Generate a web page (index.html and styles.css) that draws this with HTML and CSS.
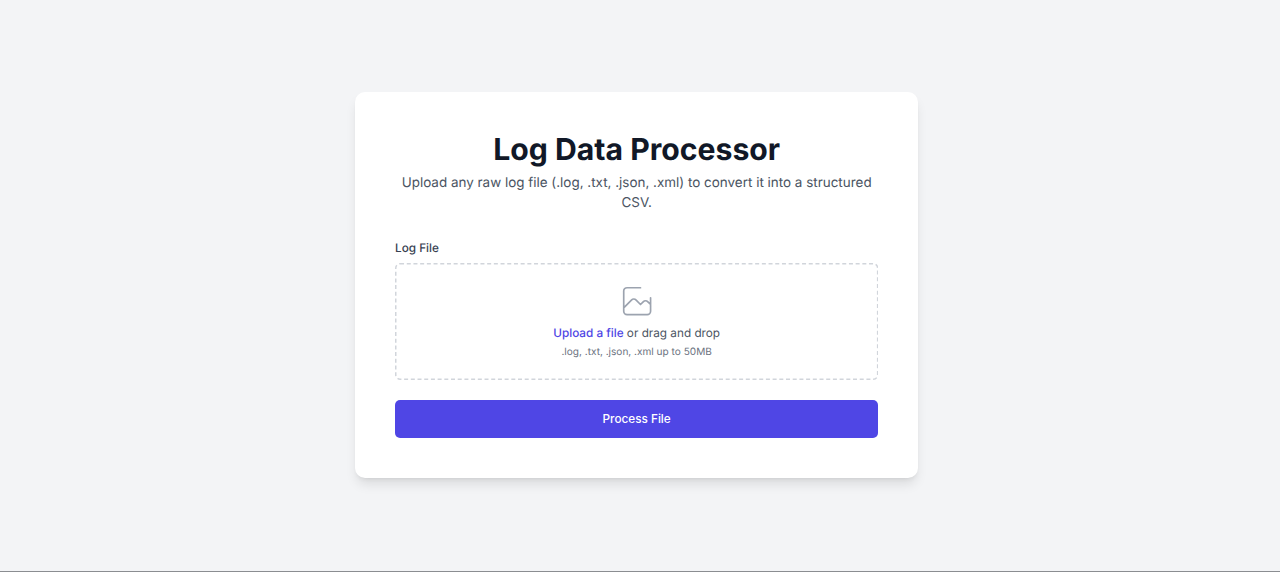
FILE: index.html
```
<!DOCTYPE html>
<html lang="en">
<head>
<meta charset="utf-8">
<title>Log Data Processor</title>
<link rel="stylesheet" href="styles.css">
</head>
<body>
<main class="card">
  <header class="header">
    <h1 class="title">Log Data Processor</h1>
    <p class="subtitle">Upload any raw log file (.log, .txt, .json, .xml) to convert it into a structured CSV.</p>
  </header>
  <form class="form">
    <label class="label" for="file">Log File</label>
    <div class="dropzone">
      <svg class="outline" aria-hidden="true"><rect class="outline-rect" x="0.75" y="0.75" width="481.9" height="115.5" rx="4.3"/></svg>
      <svg class="icon" viewBox="0 0 48 48" fill="none" stroke="currentColor" aria-hidden="true">
        <path d="M28 8H12a4 4 0 0 0-4 4v20m32-12v8m0 0v8a4 4 0 0 1-4 4H12a4 4 0 0 1-4-4v-4m32-4-3.172-3.172a4 4 0 0 0-5.656 0L28 28M8 32l9.172-9.172a4 4 0 0 1 5.656 0L28 28" stroke-width="2" stroke-linecap="round" stroke-linejoin="round"/>
      </svg>
      <p class="prompt"><label class="link" for="file">Upload a file</label> or drag and drop</p>
      <p class="hint">.log, .txt, .json, .xml up to 50MB</p>
      <input class="file" id="file" type="file">
    </div>
    <button class="submit" type="button">Process File</button>
  </form>
</main>
</body>
</html>
```
FILE: styles.css
```
* { box-sizing: border-box; }
body {
  margin: 0;
  height: 572px;
  display: flex;
  justify-content: center;
  align-items: flex-start;
  padding: 92px 6.7px 0 0;
  background: #f3f4f6;
  border-bottom: 1px solid #8b8d91;
  font-family: Inter, sans-serif;
  color: #4b5563;
  text-rendering: geometricPrecision;
}
.card {
  width: 563.3px;
  height: 386px;
  padding: 40px;
  background: #fff;
  border-radius: 10px;
  box-shadow: 0 8px 12px -2px rgba(0, 0, 0, .1), 0 3px 5px -3px rgba(0, 0, 0, .1);
}
.header { padding-top: 1px; text-align: center; }
.title {
  margin: 0;
  font-size: 30.2px;
  line-height: 34px;
  font-weight: 700;
  color: #111827;
}
.subtitle { margin: 6px 0 0; font-size: 13.44px; line-height: 20px; }
.form { display: flex; flex-direction: column; margin-top: 27px; }
.label { font-size: 11.76px; line-height: 17px; font-weight: 500; color: #374151; }
.dropzone {
  position: relative;
  display: flex;
  flex-direction: column;
  align-items: center;
  height: 117px;
  margin-top: 6px;
  padding-top: 18px;
}
.outline { position: absolute; inset: 0; width: 100%; height: 100%; }
.outline-rect { fill: none; stroke: #d1d5db; stroke-width: 1.5; stroke-dasharray: 4 2.7; }
.icon { width: 40.3px; height: 40.3px; color: #9ca3af; }
.prompt { margin: 3.7px 0 0; font-size: 11.76px; line-height: 17px; }
.link { font-weight: 500; color: #4f46e5; }
.hint { margin: 3px 0 0; font-size: 10.08px; line-height: 14px; color: #6b7280; }
.file { display: none; }
.submit {
  height: 38px;
  margin-top: 20px;
  border: 0;
  border-radius: 5px;
  background: #4f46e5;
  color: #fff;
  font: 500 11.76px/17px Inter, sans-serif;
}
```
